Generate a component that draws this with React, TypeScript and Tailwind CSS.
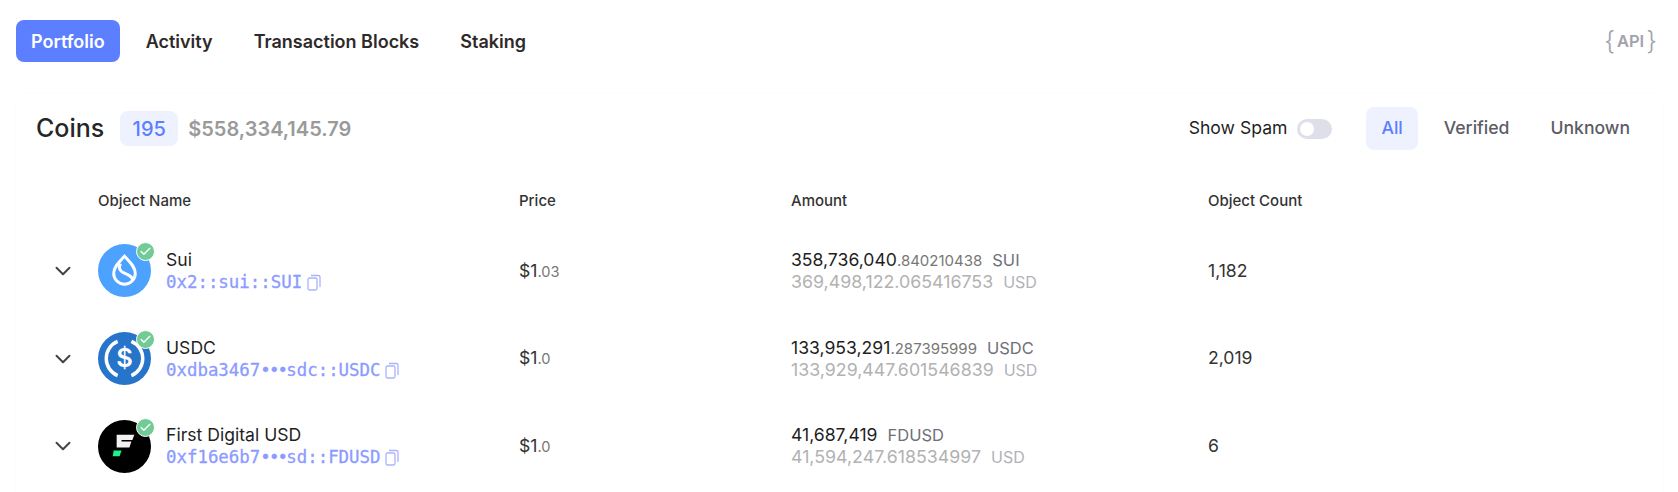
import { Check, ChevronDown } from 'lucide-react';

const tabs = ['Portfolio', 'Activity', 'Transaction Blocks', 'Staking'];

function SuiLogo() {
  return (
    <svg viewBox="0 0 54 54" className="w-full h-full">
      <circle cx="27" cy="27" r="27" fill="#4DA2FF" />
      <path
        d="M27 12.500c5 5.500 11 10.500 11 17.500 0 6-5 11-11 11s-11-5-11-11c0-7 6-12 11-17.500z"
        fill="none"
        stroke="#fff"
        strokeWidth="3"
      />
      <path d="M23 20c-3 5 0 8 4.500 10 4.500 2 7.500 3 8 7" fill="none" stroke="#fff" strokeWidth="3" />
    </svg>
  );
}

function UsdcLogo() {
  return (
    <svg viewBox="0 0 54 54" className="w-full h-full">
      <circle cx="27" cy="27" r="27" fill="#2775CA" />
      <path d="M20 9.500a19 19 0 0 0 0 35" fill="none" stroke="#fff" strokeWidth="3.500" />
      <path d="M34 9.500a19 19 0 0 1 0 35" fill="none" stroke="#fff" strokeWidth="3.500" />
      <text x="27" y="36" textAnchor="middle" fill="#fff" fontSize="26" fontWeight="600" fontFamily="Inter, sans-serif">
        $
      </text>
    </svg>
  );
}

function FdLogo() {
  return (
    <svg viewBox="0 0 54 54" className="w-full h-full">
      <circle cx="27" cy="27" r="27" fill="#000" />
      <path d="M19 15h18l-2 5.500H24v1.500h10l-2 6H19z" fill="#f2f2f2" />
      <path d="M16 31h8l-2 6h-7z" fill="#1ef28a" />
    </svg>
  );
}

function CopyIcon() {
  return (
    <svg viewBox="0 0 14 17" className="ml-[5px] h-[17px] w-[14px] text-[#a9b4ff]" fill="none" stroke="currentColor" strokeWidth="1.300">
      <rect x="1" y="4" width="9" height="12" rx="1.500" />
      <path d="M4 1.500h7.500a1.500 1.500 0 0 1 1.500 1.500v10" />
    </svg>
  );
}

const rows = [
  {
    name: 'Sui',
    logo: <SuiLogo />,
    address: '0x2::sui::SUI',
    addressEnd: '',
    cents: '03',
    whole: '358,736,040',
    decimals: '.840210438',
    symbol: 'SUI',
    usd: '369,498,122.065416753',
    count: '1,182',
  },
  {
    name: 'USDC',
    logo: <UsdcLogo />,
    address: '0xdba3467',
    addressEnd: 'sdc::USDC',
    cents: '0',
    whole: '133,953,291',
    decimals: '.287395999',
    symbol: 'USDC',
    usd: '133,929,447.601546839',
    count: '2,019',
  },
  {
    name: 'First Digital USD',
    logo: <FdLogo />,
    address: '0xf16e6b7',
    addressEnd: 'sd::FDUSD',
    cents: '0',
    whole: '41,687,419',
    decimals: '',
    symbol: 'FDUSD',
    usd: '41,594,247.618534997',
    count: '6',
  },
];

export default function App() {
  return (
    <div className="h-[492px] w-[1678px] overflow-hidden bg-white font-['Inter',sans-serif] text-[#1f1f1f]">
      {/* Tabs */}
      <div className="flex items-center justify-between pl-4 pr-[21px] pt-5">
        <div className="flex items-center gap-[11px]">
          {tabs.map((tab, i) => (
            <div
              key={tab}
              className={
                i === 0
                  ? 'h-[42px] flex items-center px-[15px] rounded-lg bg-[#5c7fff] text-white text-[18px] font-semibold'
                  : 'h-[42px] flex items-center px-[15px] rounded-lg text-[#2f2a2a] text-[18px] font-semibold'
              }
            >
              {tab}
            </div>
          ))}
        </div>
        <div className="flex items-center gap-[2px] text-[#a2a2ac] font-semibold text-[16.500px]">
          <span className="text-[26px] font-light leading-none">{'{'}</span>
          API
          <span className="text-[26px] font-light leading-none">{'}'}</span>
        </div>
      </div>

      {/* Card */}
      <div className="mx-4 mt-[32px] h-[500px] rounded-lg shadow-[0_0_4px_rgba(0,0,0,0.02)] px-5">
        <div className="flex items-center justify-between pt-[13px]">
          <div className="flex items-center">
            <span className="text-[25px] font-medium text-[#262626]">Coins</span>
            <span className="ml-[16px] h-[35px] w-[58px] flex items-center justify-center rounded-lg bg-[#eef2ff] text-[#5c7fff] text-[20px] font-medium">
              195
            </span>
            <span className="ml-[10px] text-[20px] font-semibold text-[#9a9a9a]">$558,334,145.79</span>
          </div>
          <div className="flex items-center">
            <span className="text-[17.600px] text-[#1f1f1f]">Show Spam</span>
            <div className="ml-[10px] h-5 w-[35px] rounded-full bg-[#dfdfe9] p-[3px]">
              <div className="h-[14px] w-[14px] rounded-full bg-white" />
            </div>
            <div className="ml-[34px] flex items-center gap-[11px]">
              <div className="h-[43px] px-[15px] flex items-center rounded-lg bg-[#eef2ff] text-[#5c7fff] text-[17.600px] font-medium">
                All
              </div>
              <div className="h-[43px] px-[15px] flex items-center text-[#5c5c66] text-[17.600px] font-medium">Verified</div>
              <div className="h-[43px] pl-[15px] pr-[12px] flex items-center text-[#5c5c66] text-[17.600px] font-medium">
                Unknown
              </div>
            </div>
          </div>
        </div>

        {/* Table header */}
        <div className="mt-[41px] grid grid-cols-[421px_272px_417px_1fr] pl-[62px] text-[15px] leading-5 font-medium text-[#333]">
          <div>Object Name</div>
          <div>Price</div>
          <div>Amount</div>
          <div>Object Count</div>
        </div>

        {/* Rows */}
        <div className="mt-[16px] flex flex-col">
          {rows.map((row) => (
            <div key={row.name} className="h-[87.750px] grid grid-cols-[421px_272px_417px_1fr] items-center pl-[62px] relative">
              <ChevronDown className="absolute left-[14px] top-1/2 -translate-y-1/2 w-[26px] h-[26px] text-[#444]" strokeWidth={1.800} />
              <div className="flex items-center">
                <div className="relative h-[53px] w-[53px] shrink-0">
                  {row.logo}
                  <div className="absolute -right-[4px] -top-[2px] h-[19px] w-[19px] rounded-full border border-white bg-[#72cb95] flex items-center justify-center">
                    <Check className="h-[13px] w-[13px] text-white" strokeWidth={2.500} />
                  </div>
                </div>
                <div className="ml-[15px]">
                  <div className="text-[17.600px] leading-[23px] text-[#1f1f1f]">{row.name}</div>
                  <div className="flex items-center text-[#8b9bff] text-[17.400px] leading-[23px] font-['DejaVu_Sans_Mono',monospace] [-webkit-text-stroke:0.3px_#8b9bff]">
                    {row.address}
                    {row.addressEnd && <span className="tracking-[-1.800px]">•••</span>}
                    {row.addressEnd}
                    <CopyIcon />
                  </div>
                </div>
              </div>
              <div className="text-[17.600px] text-[#333]">
                $1<span className="text-[14.600px] text-[#777]">.{row.cents}</span>
              </div>
              <div>
                <div className="leading-[21px] text-[17.600px] text-[#1f1f1f]">
                  {row.whole}
                  <span className="text-[15px] text-[#777]">{row.decimals}</span>
                  <span className="ml-[10px] text-[16.500px] text-[#6f6f78]">{row.symbol}</span>
                </div>
                <div className="leading-[21px] text-[17.800px] text-[#b2b2b2]">
                  {row.usd}
                  <span className="ml-[10px] text-[16px] text-[#b2b2b8]">USD</span>
                </div>
              </div>
              <div className="text-[17.600px] text-[#333]">{row.count}</div>
            </div>
          ))}
        </div>
      </div>
    </div>
  );
}
